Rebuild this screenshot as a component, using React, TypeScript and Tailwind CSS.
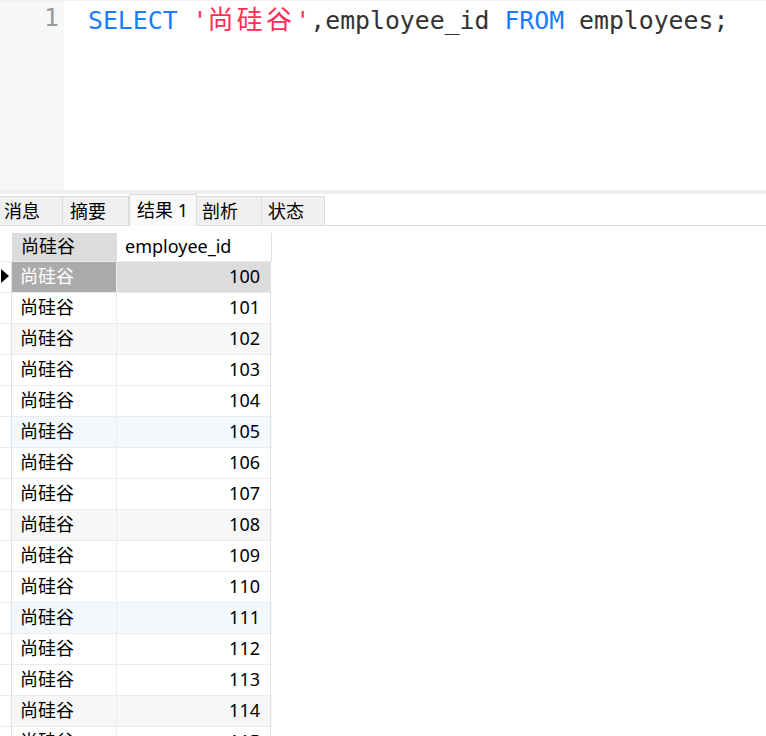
import React from "react";

const ids = Array.from({ length: 16 }, (_, i) => 100 + i);

// background of each data row; the first one is the selected row
function rowBg(i: number) {
    if (i % 6 === 2) return "bg-[#f7f7f7]";
    if (i % 6 === 5) return "bg-[#f3f8fd]";
    return "bg-white";
}

const tabs = [
    { label: "消息", w: "w-[63px]", pad: "pl-[4px]" },
    { label: "摘要", w: "w-[66px]", pad: "pl-[7px]" },
    { label: "结果 1", w: "w-[68px]", pad: "pl-[7px]", active: true },
    { label: "剖析", w: "w-[65px]", pad: "pl-[5px]" },
    { label: "状态", w: "w-[63px]", pad: "pl-[6px]" },
];

export default function App() {
    return (
        <div className="w-[766px] h-[736px] overflow-hidden bg-white font-['Noto_Sans','Noto_Sans_CJK_SC',sans-serif] text-black">
            {/* Editor */}
            <div className="flex h-[190px] border-t border-[#f0f0f0]">
                <div className="w-[64px] bg-[#f7f7f7] pr-[5px] text-right font-['DejaVu_Sans_Mono',monospace] text-[24.8px] leading-[33px] text-[#9a9a9a]">
                    1
                </div>
                <div className="flex-1 pl-[24px] font-['DejaVu_Sans_Mono',monospace] text-[24.8px] leading-[33px] whitespace-pre text-[#333]">
                    <span className="text-[#1a7cff]">SELECT</span>{" "}
                    <span className="text-[#ff2d55]">
                        '
                        {/* CJK glyphs take two monospace cells in the editor */}
                        <span className="font-['Noto_Sans_CJK_SC',sans-serif] text-[26px] tracking-[3.3px]">尚硅谷</span>
                        '
                    </span>
                    ,employee_id <span className="text-[#1a7cff]">FROM</span> employees;
                </div>
            </div>

            {/* Splitter */}
            <div className="h-[4px] bg-[#efefef]" />

            {/* Tabs */}
            <div className="flex h-[32px] items-end border-b border-[#dcdcdc]">
                {tabs.map((t) => (
                    <div
                        key={t.label}
                        className={`${t.w} ${t.pad} -mb-px flex items-center border-r border-t border-[#dcdcdc] text-[18px] whitespace-pre ${
                            t.active ? "h-[32px] bg-[#f9f9f9] border-l border-b-0" : "h-[30px] bg-[#f0f0f0] border-b"
                        }`}
                    >
                        {t.label}
                    </div>
                ))}
            </div>

            {/* Result grid */}
            <div className="mt-[7px] w-[272px] text-[18px]">
                <div className="flex h-[28px]">
                    <div className="w-[12px]" />
                    <div className="w-[105px] bg-[#dcdcdc] pl-[9px] leading-[27px]">尚硅谷</div>
                    <div className="w-[155px] border-r border-[#e0e0e0] pl-[8px] leading-[27px]">employee_id</div>
                </div>
                {ids.map((id, i) => {
                    const sel = i === 0;
                    return (
                        <div key={id} className={`flex h-[31px] border-t border-[#ebebeb] ${sel ? "" : rowBg(i)}`}>
                            <div className="relative w-[12px] border-r border-[#e0e0e0] bg-white">
                                {sel && (
                                    <span className="absolute left-[1px] top-[7px] h-0 w-0 border-y-[7px] border-l-[8px] border-y-transparent border-l-black" />
                                )}
                            </div>
                            <div
                                className={`w-[105px] border-r border-[#ebebeb] pl-[8px] leading-[29px] ${
                                    sel ? "bg-[#ababab] text-white" : ""
                                }`}
                            >
                                尚硅谷
                            </div>
                            <div
                                className={`w-[154px] border-r border-[#e0e0e0] pr-[10px] text-right leading-[29px] ${
                                    sel ? "bg-[#dcdcdc]" : ""
                                }`}
                            >
                                {id}
                            </div>
                        </div>
                    );
                })}
            </div>
        </div>
    );
}
